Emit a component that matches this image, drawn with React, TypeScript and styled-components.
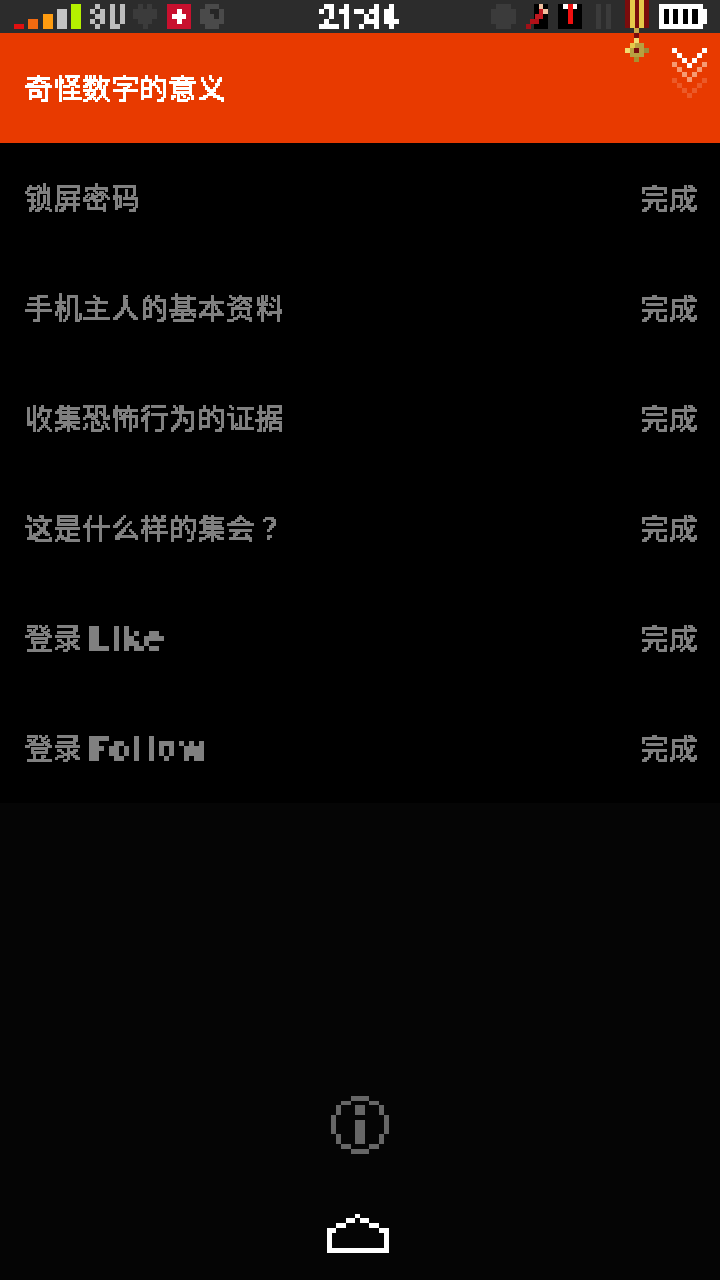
import React from 'react';
import styled, { createGlobalStyle } from 'styled-components';

const GlobalStyle = createGlobalStyle`
  html, body {
    margin: 0;
    padding: 0;
    background: #050505;
  }
  body {
    font-family: 'Noto Sans CJK SC', 'Liberation Sans', sans-serif;
  }
`;

const Page = styled.div`
  position: relative;
  width: 720px;
  height: 1280px;
  overflow: hidden;
  display: flex;
  flex-direction: column;
  background: #050505;
`;

const FilterDefs = styled.svg`
  position: absolute;
  width: 0;
  height: 0;
`;

const StatusBar = styled.div`
  height: 33px;
  flex: none;
  display: flex;
  align-items: flex-start;
  padding: 4px 0 0 14px;
  box-sizing: border-box;
  background: #2c2c2c;
`;

const SignalBars = styled.div`
  display: flex;
  align-items: flex-end;
  gap: 4.25px;
  height: 25px;
`;

interface BarProps {
  readonly level: number;
  readonly color: string;
}

const SignalBar = styled.div<BarProps>`
  width: 10px;
  height: ${({ level }) => level}px;
  background: ${({ color }) => color};
`;

const Network = styled.span`
  width: 33px;
  margin-left: 9px;
  height: 25px;
  font: bold 30px/25px Roboto, sans-serif;
  letter-spacing: -1px;
  color: #bdbdbd;
  white-space: nowrap;
  filter: url(#pixel-wide);
`;

const Clock = styled.span`
  width: 82px;
  margin-left: 95px;
  height: 25px;
  font: bold 32px/25px Roboto, sans-serif;
  letter-spacing: -0.5px;
  color: #fff;
  -webkit-text-stroke: 0.5px #fff;
  white-space: nowrap;
  filter: url(#pixel-wide);
`;

const Header = styled.header`
  height: 110px;
  flex: none;
  display: flex;
  align-items: center;
  justify-content: space-between;
  padding: 0 13px 0 25px;
  background: #e83a00;
`;

const Title = styled.h1`
  margin: 0 0 2px;
  font-size: 28px;
  font-weight: 400;
  letter-spacing: 0.7px;
  color: #fff;
  filter: url(#pixel-fine);
`;

const List = styled.div`
  flex: none;
  background: #000;
`;

const Row = styled.div`
  height: 110px;
  display: flex;
  align-items: center;
  justify-content: space-between;
  padding: 0 22px 0 25px;
  font-size: 28px;
  letter-spacing: 0.8px;
  color: #808080;
`;

const RowLabel = styled.div`
  display: flex;
  align-items: center;
`;

const Cjk = styled.span`
  margin-bottom: 2px;
  filter: url(#pixel-fine);
`;

const Latin = styled.span`
  margin-left: 6px;
  font: bold 30px 'DejaVu Sans', sans-serif;
  letter-spacing: 1.9px;
  color: #808080;
  filter: url(#pixel-wide);
`;

const Footer = styled.div`
  display: flex;
  flex-direction: column;
  align-items: center;
  padding-top: 293px;
  gap: 60px;
`;

interface PixelProps {
  readonly w: number;
  readonly h: number;
  readonly ml?: number;
  readonly mt?: number;
}

const PixelSvg = styled.svg<PixelProps>`
  display: block;
  flex: none;
  width: ${({ w }) => w}px;
  height: ${({ h }) => h}px;
  margin-left: ${({ ml }) => ml ?? 0}px;
  margin-top: ${({ mt }) => mt ?? 0}px;
  shape-rendering: crispEdges;
`;

const MedalSvg = styled(PixelSvg)`
  position: absolute;
  left: 625px;
  top: 0;
`;

// [x, y, width, height, colour]
type Cell = [number, number, number, number, string];

const Pixels: React.FC<PixelProps & { cells: Cell[]; as?: typeof PixelSvg }> = ({
  cells,
  as: Svg = PixelSvg,
  ...size
}) => (
  <Svg {...size} viewBox={`0 0 ${size.w} ${size.h}`}>
    {cells.map(([x, y, w, h, fill], i) => (
      <rect key={i} x={x} y={y} width={w} height={h} fill={fill} />
    ))}
  </Svg>
);

const DIM = '#3b3b3b';

const heart: Cell[] = [
  [5, 0, 5, 5, DIM],
  [14, 0, 5, 5, DIM],
  [0, 5, 24, 10, DIM],
  [5, 15, 14, 5, DIM],
  [10, 20, 5, 5, DIM],
];

const flag: Cell[] = [
  [0, 0, 24, 25, '#c8102e'],
  [5, 10, 14, 5, '#fff'],
  [10, 5, 5, 15, '#fff'],
];

const gear: Cell[] = [
  [5, 0, 14, 25, '#4a4a4a'],
  [0, 5, 24, 15, '#4a4a4a'],
  [10, 5, 9, 5, '#262626'],
  [14, 10, 5, 5, '#262626'],
];

const dimCircle: Cell[] = [
  [5, 0, 15, 25, DIM],
  [0, 5, 25, 15, DIM],
];

const figure: Cell[] = [
  [8, 0, 14, 25, '#000'],
  [13, 0, 4, 5, '#f0c0a0'],
  [17, 5, 5, 5, '#f0c0a0'],
  [13, 5, 4, 5, '#c01820'],
  [9, 10, 8, 5, '#c01820'],
  [4, 15, 9, 5, '#b01018'],
  [0, 20, 5, 5, '#a01018'],
];

const suit: Cell[] = [
  [0, 0, 24, 25, '#000'],
  [5, 0, 14, 5, '#fff'],
  [10, 0, 5, 20, '#f01010'],
];

const dimBars: Cell[] = [
  [0, 0, 5, 25, DIM],
  [10, 0, 5, 25, DIM],
];

const battery: Cell[] = [
  [0, 0, 44, 25, '#fff'],
  [44, 5, 4, 15, '#fff'],
  [5, 5, 5, 15, '#000'],
  [14, 5, 5, 15, '#000'],
  [24, 5, 5, 15, '#000'],
  [33, 5, 6, 15, '#000'],
];

const medal: Cell[] = [
  [0, 0, 24, 28, '#7a0c0c'],
  [5, 0, 5, 28, '#e6c84a'],
  [14, 0, 5, 28, '#e6c84a'],
  [9, 28, 5, 5, '#c8a848'],
  [9, 33, 5, 5, '#7a0c0c'],
  [9, 38, 5, 5, '#f2dc70'],
  [5, 43, 14, 14, '#b8a040'],
  [0, 48, 5, 5, '#f2dc70'],
  [19, 48, 5, 5, '#9c8a38'],
  [9, 48, 5, 5, '#7a0c0c'],
  [5, 43, 5, 5, '#e6c84a'],
  [9, 57, 5, 5, '#a89030'],
];

const chevronRow = (y: number, alpha: string): Cell[] => [
  [0, y, 5, 5, alpha],
  [30, y, 5, 5, alpha],
  [5, y + 5, 5, 5, alpha],
  [25, y + 5, 5, 5, alpha],
  [10, y + 10, 5, 5, alpha],
  [20, y + 10, 5, 5, alpha],
  [15, y + 15, 5, 5, alpha],
];

const chevrons: Cell[] = [
  ...chevronRow(30, '#ec5a28'),
  ...chevronRow(14, '#f69a72'),
  ...chevronRow(0, '#fff'),
];

const INFO = '#666';

const info: Cell[] = [
  [20, 0, 18, 5, INFO],
  [10, 5, 10, 4, INFO],
  [38, 5, 10, 4, INFO],
  [5, 9, 5, 10, INFO],
  [48, 9, 5, 10, INFO],
  [0, 19, 5, 19, INFO],
  [53, 19, 5, 19, INFO],
  [5, 38, 5, 10, INFO],
  [48, 38, 5, 10, INFO],
  [10, 48, 10, 5, INFO],
  [38, 48, 10, 5, INFO],
  [20, 53, 18, 5, INFO],
  [24, 9, 10, 10, INFO],
  [24, 24, 10, 24, INFO],
];

const home: Cell[] = [
  [28, 0, 5, 4, '#fff'],
  [19, 4, 9, 5, '#fff'],
  [33, 4, 9, 5, '#fff'],
  [9, 9, 10, 5, '#fff'],
  [42, 9, 10, 5, '#fff'],
  [0, 14, 5, 25, '#fff'],
  [57, 14, 5, 25, '#fff'],
  [5, 14, 4, 5, '#fff'],
  [52, 14, 5, 5, '#fff'],
  [5, 34, 52, 5, '#fff'],
];

const signal: [number, string][] = [
  [5, '#e01010'],
  [10, '#f26a10'],
  [15, '#ff9c10'],
  [20, '#c4c4c4'],
  [25, '#b4f000'],
];

const tasks: { label: string; latin?: string }[] = [
  { label: '锁屏密码' },
  { label: '手机主人的基本资料' },
  { label: '收集恐怖行为的证据' },
  { label: '这是什么样的集会 ？' },
  { label: '登录', latin: 'Like' },
  { label: '登录', latin: 'Follow' },
];

// samples the text on a coarse grid, as the game's low resolution text does
const PixelFilter: React.FC<{ id: string; size: number; cutoff: string }> = ({
  id,
  size,
  cutoff,
}) => {
  const radius = Math.floor(size / 2);
  return (
    <filter
      id={id}
      x="0"
      y="0"
      width="100%"
      height="100%"
      colorInterpolationFilters="sRGB"
    >
      <feFlood x={radius} y={radius} width="1" height="1" />
      <feComposite width={size} height={size} />
      <feTile result="grid" />
      <feComposite in="SourceGraphic" in2="grid" operator="in" />
      <feMorphology operator="dilate" radius={radius} />
      <feComponentTransfer>
        <feFuncA type="discrete" tableValues={cutoff} />
      </feComponentTransfer>
    </filter>
  );
};

const App: React.FC = () => (
  <Page>
    <GlobalStyle />
    <FilterDefs aria-hidden="true">
      <PixelFilter id="pixel-wide" size={5} cutoff="0 1 1 1" />
      <PixelFilter id="pixel-fine" size={2} cutoff="0 0 1 1" />
    </FilterDefs>
    <StatusBar>
      <SignalBars>
        {signal.map(([level, color]) => (
          <SignalBar key={color} level={level} color={color} />
        ))}
      </SignalBars>
      <Network>3U</Network>
      <Pixels w={24} h={25} ml={10} cells={heart} />
      <Pixels w={24} h={25} ml={10} cells={flag} />
      <Pixels w={24} h={25} ml={9} cells={gear} />
      <Clock>21:44</Clock>
      <Pixels w={25} h={25} ml={90} cells={dimCircle} />
      <Pixels w={24} h={25} ml={10} cells={figure} />
      <Pixels w={24} h={25} ml={8} cells={suit} />
      <Pixels w={15} h={25} ml={14} cells={dimBars} />
      <Pixels w={48} h={25} ml={48} cells={battery} />
    </StatusBar>
    <Pixels as={MedalSvg} w={24} h={62} cells={medal} />
    <Header>
      <Title>奇怪数字的意义</Title>
      <Pixels w={35} h={50} cells={chevrons} mt={-31} />
    </Header>
    <List>
      {tasks.map(({ label, latin }) => (
        <Row key={label + latin}>
          <RowLabel>
            <Cjk>{label}</Cjk>
            {latin && <Latin>{latin}</Latin>}
          </RowLabel>
          <Cjk>完成</Cjk>
        </Row>
      ))}
    </List>
    <Footer>
      <Pixels w={58} h={58} cells={info} />
      <Pixels w={62} h={39} ml={-4} cells={home} />
    </Footer>
  </Page>
);

export default App;
